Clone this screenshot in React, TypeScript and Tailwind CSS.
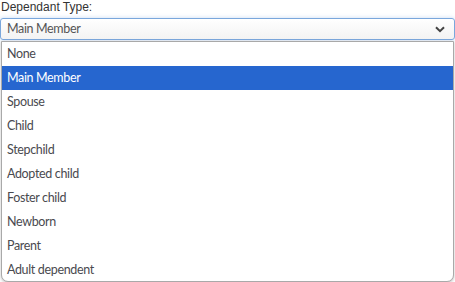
import React from 'react';

const options = [
    "None",
    "Main Member",
    "Spouse",
    "Child",
    "Stepchild",
    "Adopted child",
    "Foster child",
    "Newborn",
    "Parent",
    "Adult dependent",
];

const Chevron = () => <svg width="10" height="7" viewBox="0 0 10 7" className="text-[#444]">
    <path d="M1 1.2 L5 5.2 L9 1.2" fill="none" stroke="currentColor" strokeWidth="2" />
</svg>;

export default function App() {
    const selected = "Main Member";

    return <div className="w-[455px] h-[282px] bg-white overflow-hidden relative font-['Lato',sans-serif]">
        <div className="font-['Liberation_Sans',sans-serif] text-[12px] text-[#333] leading-[14px] h-[18px] pl-[1px]">
            Dependant Type:
        </div>
        <div className="h-[22px] w-[455px] border border-[#7aa7dc] rounded-[3px] bg-gradient-to-b from-white to-[#f3f3f3] shadow-[0_0_4px_rgba(100,150,220,0.35)] flex flex-row items-center justify-between pl-[6px] pr-[9px]">
            <span className="text-[12.5px] tracking-[-0.35px] text-[#555]">{ selected }</span>
            <Chevron />
        </div>
        <div className="absolute left-[1px] top-[41px] w-[453px] h-[241px] bg-white border border-[#a9a9a9] rounded-b-[7px] shadow-[0_1px_3px_rgba(0,0,0,0.25)] flex flex-col overflow-hidden">
            { options.map( option => {
                const active = option === selected;
                return <div key={option} className={active
                    ? "h-[24px] shrink-0 flex items-center pl-[5px] text-[12.5px] tracking-[-0.35px] bg-[#2666cf] text-white"
                    : "h-[24px] shrink-0 flex items-center pl-[5px] text-[12.5px] tracking-[-0.35px] text-[#4a4a4f]"}>
                    { option }
                </div>
            } )}
        </div>
    </div>;
}
